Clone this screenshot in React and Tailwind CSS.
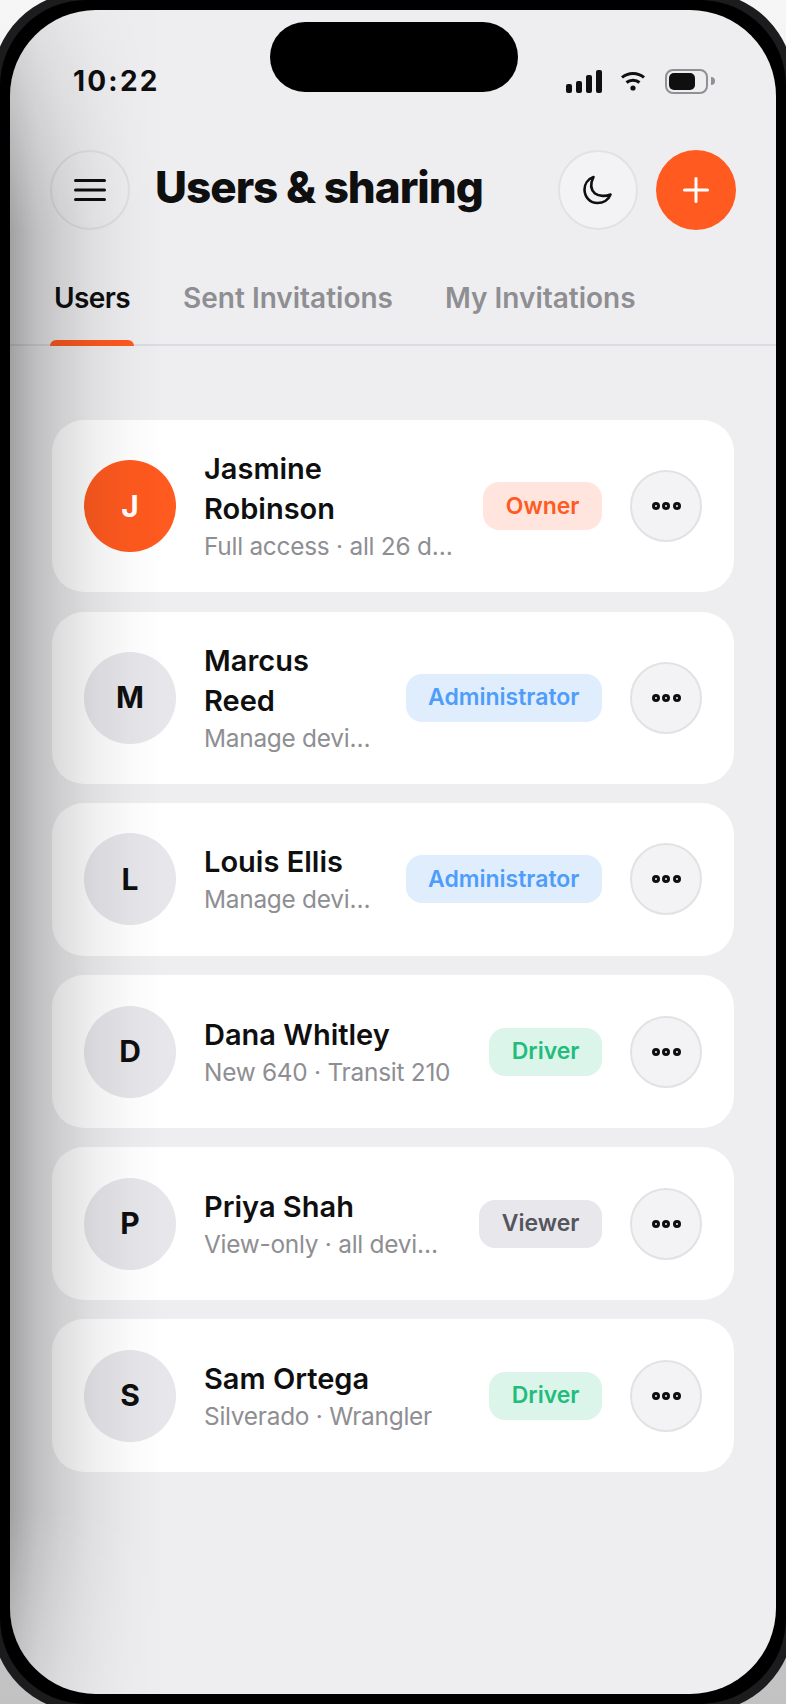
const users = [
  { initial: "J", name: "Jasmine Robinson", sub: "Full access · all 26 devices", role: "Owner", owner: true },
  { initial: "M", name: "Marcus Reed", sub: "Manage devices and users", role: "Administrator" },
  { initial: "L", name: "Louis Ellis", sub: "Manage devices and users", role: "Administrator" },
  { initial: "D", name: "Dana Whitley", sub: "New 640 · Transit 210", role: "Driver" },
  { initial: "P", name: "Priya Shah", sub: "View-only · all devices", role: "Viewer" },
  { initial: "S", name: "Sam Ortega", sub: "Silverado · Wrangler", role: "Driver" },
];

const badgeStyles = {
  Owner: "bg-[#ffe5dd] text-[#ff5a1f]",
  Administrator: "bg-[#e0edfd] text-[#4f9dfb]",
  Driver: "bg-[#dcf5ea] text-[#22bd7d]",
  Viewer: "bg-[#e7e7ec] text-[#55555c]",
};

const StatusIcons = () => (
  <div className="flex items-center">
    <svg width="36" height="23" viewBox="0 0 36 23" fill="#0f0f10">
      <rect x="0" y="14" width="6" height="9" rx="2" />
      <rect x="10" y="11" width="6" height="12" rx="2" />
      <rect x="20" y="5" width="6" height="18" rx="2" />
      <rect x="30" y="0" width="6" height="23" rx="2" />
    </svg>
    <svg className="ml-[19px]" width="24" height="20" viewBox="0 0 24 20" fill="none" stroke="#0f0f10" strokeWidth="3">
      <path d="M1 6.5C7 1 17 1 23 6.5" />
      <path d="M5.5 11.5C9 8.5 15 8.5 18.5 11.5" />
      <circle cx="12" cy="17" r="2.6" fill="#0f0f10" stroke="none" />
    </svg>
    <div className="ml-[20px] flex items-center">
      <div className="h-[25px] w-[43px] rounded-[8px] border-2 border-[#8f8f94] p-[2px]">
        <div className="h-full w-[26px] rounded-[5px] bg-[#0f0f10]" />
      </div>
      <div className="ml-[3px] h-[8px] w-[4px] rounded-r-full bg-[#8f8f94]" />
    </div>
  </div>
);

const UserCard = ({ user }) => (
  <div className="flex min-h-[152.5px] items-center rounded-[32px] bg-white px-[32px] py-[29px]">
    <div
      className={`flex h-[92px] w-[92px] shrink-0 items-center justify-center rounded-full text-[30px] font-bold ${
        user.owner ? "bg-[#ff5a1f] text-white" : "bg-[#e6e6eb] text-[#0f0f10]"
      }`}
    >
      {user.initial}
    </div>
    <div className="ml-[28px] min-w-0 flex-1">
      <div className="text-[29px] font-semibold leading-[40px] text-[#0f0f10]">{user.name}</div>
      <div className="truncate text-[24.4px] leading-[34px] tracking-[-0.25px] text-[#8e8e93]">{user.sub}</div>
    </div>
    <span className={`ml-[28px] flex h-[48px] shrink-0 items-center rounded-[16px] px-[22.5px] text-[23px] font-semibold ${badgeStyles[user.role]}`}>
      {user.role}
    </span>
    <button className="ml-[28px] flex h-[72px] w-[72px] shrink-0 items-center justify-center gap-[2.5px] rounded-full border-2 border-[#e2e2e4] bg-[#f3f3f5]">
      <span className="h-[8px] w-[8px] rounded-full border-[3px] border-[#0f0f10]" />
      <span className="h-[8px] w-[8px] rounded-full border-[3px] border-[#0f0f10]" />
      <span className="h-[8px] w-[8px] rounded-full border-[3px] border-[#0f0f10]" />
    </button>
  </div>
);

export default function App() {
  return (
    <div className="relative h-[1704px] w-[786px] overflow-hidden bg-gradient-to-b from-[#f6f6f6] to-[#c2c2c2] font-['Inter',sans-serif]">
      <div className="absolute -left-[8px] -top-[8px] h-[1720px] w-[802px] rounded-[92px] bg-[#1c1c1e] p-[8px]">
        <div className="h-full w-full rounded-[86px] bg-black p-[10px]">
          <div className="relative flex h-full flex-col overflow-hidden rounded-[86px] bg-[#eeeef0]">
            <div className="absolute left-[260px] top-[12px] h-[70px] w-[248px] rounded-full bg-black" />

            <div className="mt-[58px] flex h-[26px] shrink-0 items-center justify-between pl-[63px] pr-[61px]">
              <span className="text-[28px] font-bold leading-[32px] tracking-[2.2px] text-[#0f0f10]">10:22</span>
              <StatusIcons />
            </div>

            <div className="mt-[56px] flex items-center px-[40px]">
              <button className="flex h-[80px] w-[80px] shrink-0 items-center justify-center rounded-full border-2 border-[#e0e0e3]">
                <svg width="32" height="22" viewBox="0 0 32 22" stroke="#0f0f10" strokeWidth="3" strokeLinecap="round">
                  <path d="M1.5 1.5h29M1.5 11h29M1.5 20.5h29" />
                </svg>
              </button>
              <h1 className="ml-[25px] flex-1 pb-[6px] text-[44px] font-extrabold tracking-[-1px] text-[#0f0f10]">Users &amp; sharing</h1>
              <button className="flex h-[80px] w-[80px] shrink-0 items-center justify-center rounded-full border-2 border-[#e2e2e4] bg-[#f3f3f5]">
                <svg width="30" height="30" viewBox="0 0 30 30" fill="none" stroke="#0f0f10" strokeWidth="2.6" strokeLinejoin="round">
                  <path d="M10.5 2C7 9 8 15 12 18.5C16 21.5 23 21.5 27.5 19.5C25.5 25 20 28 14.5 28C7 28 1.5 22 1.5 14.5C1.5 9 5 4 10.5 2Z" />
                </svg>
              </button>
              <button className="ml-[18px] flex h-[80px] w-[80px] shrink-0 items-center justify-center rounded-full bg-[#ff5a1f]">
                <svg width="26" height="26" viewBox="0 0 26 26" stroke="#fff" strokeWidth="3" strokeLinecap="round">
                  <path d="M13 1.5v23M1.5 13h23" />
                </svg>
              </button>
            </div>

            <div className="mt-[48px] flex h-[68px] border-b-2 border-[#dcdce0] px-[40px] text-[28px] font-semibold leading-[40px]">
              <div className="relative h-[66px] px-[4px] tracking-[-0.6px] text-[#0f0f10]">
                Users
                <div className="absolute inset-x-0 -bottom-[2px] h-[6px] rounded-t-[6px] bg-[#ff5a1f]" />
              </div>
              <div className="ml-[49px] text-[#8e8e93]">Sent Invitations</div>
              <div className="ml-[52px] text-[#8e8e93]">My Invitations</div>
            </div>

            <div className="mt-[74px] flex flex-col gap-[19.6px] px-[42px]">
              {users.map((user) => (
                <UserCard key={user.initial} user={user} />
              ))}
            </div>

            {/* soft shade down the left side of the screen */}
            <div className="pointer-events-none absolute inset-0 bg-[linear-gradient(to_right,rgba(0,0,0,0.32)_0px,rgba(0,0,0,0.2)_25px,rgba(0,0,0,0.13)_50px,rgba(0,0,0,0.06)_85px,rgba(0,0,0,0.02)_120px,transparent_155px)] [mask-image:linear-gradient(to_bottom,rgba(0,0,0,0.25)_0px,black_220px,black_1500px,rgba(0,0,0,0.55)_1684px)]" />
          </div>
        </div>
      </div>
    </div>
  );
}
